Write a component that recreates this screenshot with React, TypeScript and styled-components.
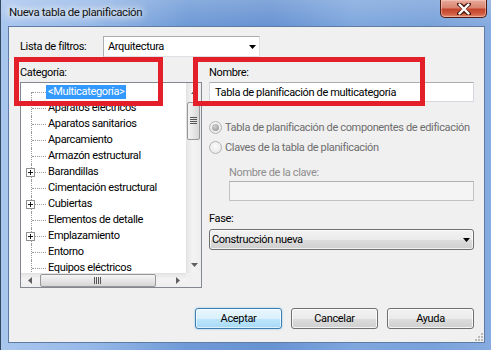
import React from 'react';
import styled, { createGlobalStyle, css } from 'styled-components';

const GlobalStyle = createGlobalStyle`
  html, body { margin: 0; padding: 0; }
  body {
    font-family: Roboto, "Noto Sans", sans-serif;
    font-size: 11px;
    letter-spacing: -0.35px;
    color: #000;
    background: #6f9bd7;
  }
  * { box-sizing: border-box; }
`;

const Frame = styled.div`
  width: 491px;
  height: 350px;
  display: flex;
  flex-direction: column;
  padding: 0 6px 7px 7px;
  border-left: 1px solid #33475f;
  background:
    linear-gradient(180deg, rgba(255, 255, 255, 0.18) 0%, rgba(255, 255, 255, 0) 26px),
    linear-gradient(90deg, #a9c6ee 0%, #97b9e8 18%, #6f9ad6 38%, #6893d2 55%, #7fa7de 72%, #7aa2da 88%, #86abe0 100%);
`;

const TitleBar = styled.div`
  height: 26px;
  display: flex;
  align-items: flex-start;
`;

const Title = styled.div`
  padding: 5px 0 0 1px;
  font-size: 11.5px;
  letter-spacing: -0.4px;
  line-height: 15px;
  color: #111;
  text-shadow: 0 0 6px #fff, 0 0 10px rgba(255, 255, 255, 0.9), 0 0 14px rgba(255, 255, 255, 0.7);
`;

const CloseButton = styled.div`
  margin-left: auto;
  margin-right: -2px;
  width: 47px;
  height: 18px;
  display: flex;
  align-items: center;
  justify-content: center;
  border: 1px solid #4d1c14;
  border-top: none;
  border-radius: 0 0 5px 5px;
  background: linear-gradient(180deg, #e9a99a 0%, #d98470 45%, #c4442c 55%, #cf5a40 80%, #e48a6c 100%);
  box-shadow: inset 0 0 0 1px rgba(255, 220, 210, 0.45);
`;

const Client = styled.div`
  flex: 1;
  position: relative;
  display: flex;
  flex-direction: column;
  padding: 9px 10px 0 11px;
  background: #f0f0f0;
  border: 1px solid #5d7ba3;
`;

const FilterRow = styled.div`
  display: flex;
  align-items: center;
  height: 21px;
`;

const FilterLabel = styled.span`
  width: 83px;
`;

const ListSelect = styled.div`
  width: 157px;
  height: 21px;
  display: flex;
  align-items: center;
  padding-left: 4px;
  background: #fff;
  border: 1px solid #abadb3;
  border-bottom-color: #dcdfe4;
  border-right-color: #dcdfe4;
`;

const SelectText = styled.span`
  flex: 1;
`;

const ArrowSlot = styled.span`
  width: 14px;
  display: flex;
  justify-content: center;
`;

const Main = styled.div`
  display: flex;
  gap: 7px;
  margin-top: 8px;
`;

const LeftColumn = styled.div`
  width: 182px;
  display: flex;
  flex-direction: column;
`;

const RightColumn = styled.div`
  width: 265px;
  display: flex;
  flex-direction: column;
`;

const FieldLabel = styled.div<{ $disabled?: boolean; $indent?: number; $top?: number }>`
  line-height: 15px;
  height: 15px;
  margin-top: ${(p) => p.$top ?? 0}px;
  padding-left: ${(p) => p.$indent ?? 0}px;
  color: ${(p) => (p.$disabled ? '#8d8d8d' : '#000')};
`;

const Tree = styled.div`
  margin-top: 2px;
  height: 206px;
  border: 1px solid #828790;
  background: #fff;
  display: grid;
  grid-template-columns: 165px 15px;
  grid-template-rows: 190px 14px;
`;

const TreeList = styled.div`
  overflow: hidden;
  padding-top: 1px;
`;

const TreeRow = styled.div`
  height: 16px;
  display: flex;
  align-items: center;
  white-space: nowrap;
`;

const Connector = styled.span<{ $first?: boolean }>`
  position: relative;
  width: 25px;
  height: 16px;
  flex: none;
  &::before {
    content: '';
    position: absolute;
    left: 10px;
    top: ${(p) => (p.$first ? '8px' : '0')};
    bottom: 0;
    border-left: 1px dotted #9a9a9a;
  }
  &::after {
    content: '';
    position: absolute;
    left: 11px;
    top: 8px;
    width: 14px;
    border-top: 1px dotted #9a9a9a;
  }
`;

const Expander = styled.svg`
  position: absolute;
  left: 5px;
  top: 4px;
  z-index: 1;
`;

const ItemText = styled.span<{ $selected?: boolean }>`
  padding: 0 2px;
  line-height: 14px;
  ${(p) =>
    p.$selected &&
    css`
      background: #3399ff;
      color: #fff;
    `}
`;

const VScroll = styled.div`
  display: flex;
  flex-direction: column;
  background: linear-gradient(90deg, #e6e6e6, #f3f3f3 40%, #eeeeee);
  border-left: 1px solid #e2e2e2;
`;

const HScroll = styled.div`
  display: flex;
  align-items: center;
  background: linear-gradient(180deg, #e6e6e6, #f3f3f3 40%, #eeeeee);
  border-top: 1px solid #e2e2e2;
`;

const Corner = styled.div`
  background: #f0f0f0;
`;

const ArrowCell = styled.div<{ $vertical?: boolean }>`
  flex: none;
  display: flex;
  align-items: center;
  justify-content: center;
  ${(p) => (p.$vertical ? 'height: 17px;' : 'width: 17px; height: 100%;')}
`;

const Spacer = styled.div`
  flex: 1;
`;

const VThumb = styled.div`
  margin: 2px 0 0 0;
  width: 13px;
  height: 38px;
  border: 1px solid #979797;
  border-radius: 2px;
  background: linear-gradient(90deg, #f4f4f4, #e6e6e6 50%, #d6d6d6);
  display: flex;
  align-items: center;
  justify-content: center;
`;

const HThumb = styled.div`
  margin-left: 2px;
  width: 116px;
  height: 13px;
  border: 1px solid #979797;
  border-radius: 2px;
  background: linear-gradient(180deg, #f4f4f4, #e6e6e6 50%, #d6d6d6);
  display: flex;
  align-items: center;
  justify-content: center;
`;

const TextBox = styled.div<{ $disabled?: boolean }>`
  height: 20px;
  margin-top: ${(p) => (p.$disabled ? 1 : 2)}px;
  margin-left: ${(p) => (p.$disabled ? 20 : 0)}px;
  display: flex;
  align-items: center;
  padding-left: 5px;
  background: ${(p) => (p.$disabled ? '#f4f4f4' : '#fff')};
  border: 1px solid ${(p) => (p.$disabled ? '#c2c2c2' : '#d5d9df')};
  border-top-color: ${(p) => (p.$disabled ? '#adb2b5' : '#abadb3')};
  white-space: nowrap;
`;

const RadioRow = styled.div<{ $top: number }>`
  display: flex;
  align-items: center;
  gap: 3px;
  height: 16px;
  margin-top: ${(p) => p.$top}px;
  color: #6d6d6d;
  white-space: nowrap;
`;

const Radio = styled.span<{ $checked?: boolean }>`
  position: relative;
  width: 13px;
  height: 13px;
  flex: none;
  border-radius: 50%;
  border: 1px solid #b3b3b3;
  background: radial-gradient(circle at 50% 40%, #fbfbfb, #e4e4e4);
  ${(p) =>
    p.$checked &&
    css`
      &::after {
        content: '';
        position: absolute;
        left: 2px;
        top: 2px;
        width: 7px;
        height: 7px;
        border-radius: 50%;
        background: radial-gradient(circle at 40% 35%, #d0d0d0, #8f8f8f);
      }
    `}
`;

const Combo = styled.div`
  margin-top: 3px;
  height: 21px;
  display: flex;
  align-items: center;
  padding-left: 2px;
  border: 1px solid #707070;
  border-radius: 3px;
  background: linear-gradient(180deg, #f2f2f2 0%, #ebebeb 50%, #dddddd 50%, #cfcfcf 100%);
  box-shadow: inset 0 0 0 1px rgba(255, 255, 255, 0.7);
`;

const Footer = styled.div`
  margin-top: 20px;
  display: flex;
  justify-content: flex-end;
  gap: 9px;
`;

const Button = styled.div<{ $primary?: boolean }>`
  width: 87px;
  height: 21px;
  display: flex;
  align-items: center;
  justify-content: center;
  border-radius: 3px;
  border: 1px solid #707070;
  background: linear-gradient(180deg, #f2f2f2 0%, #ebebeb 50%, #dddddd 50%, #cfcfcf 100%);
  box-shadow: inset 0 0 0 1px rgba(255, 255, 255, 0.75);
  ${(p) =>
    p.$primary &&
    css`
      border-color: #3c7fb1;
      background: linear-gradient(180deg, #eaf6fd 0%, #d9f0fc 50%, #bee6fd 50%, #a7d9f5 100%);
      box-shadow: inset 0 0 0 1px rgba(255, 255, 255, 0.6), 0 0 2px rgba(60, 160, 230, 0.6);
    `}
`;

const Highlight = styled.div<{ $left: number; $width: number }>`
  position: absolute;
  top: 30px;
  left: ${(p) => p.$left}px;
  width: ${(p) => p.$width}px;
  height: 49px;
  border: 5px solid #e3202a;
  pointer-events: none;
`;

const Grip = styled.svg`
  position: absolute;
  right: 1px;
  bottom: 1px;
`;

const categories = [
  { name: '<Multicategoría>', selected: true },
  { name: 'Aparatos eléctricos' },
  { name: 'Aparatos sanitarios' },
  { name: 'Aparcamiento' },
  { name: 'Armazón estructural' },
  { name: 'Barandillas', expandable: true },
  { name: 'Cimentación estructural' },
  { name: 'Cubiertas', expandable: true },
  { name: 'Elementos de detalle' },
  { name: 'Emplazamiento', expandable: true },
  { name: 'Entorno' },
  { name: 'Equipos eléctricos' },
];

const DownArrow = ({ color = '#000' }: { color?: string }) => (
  <svg width="7" height="4" viewBox="0 0 7 4">
    <polygon points="0,0 7,0 3.5,4" fill={color} />
  </svg>
);

const Arrow = ({ dir }: { dir: 'up' | 'down' | 'left' | 'right' }) => {
  const pts = {
    up: '0,4 7,4 3.5,0',
    down: '0,0 7,0 3.5,4',
    left: '4,0 4,7 0,3.5',
    right: '0,0 0,7 4,3.5',
  }[dir];
  const vertical = dir === 'up' || dir === 'down';
  return (
    <svg width={vertical ? 7 : 4} height={vertical ? 4 : 7} viewBox={vertical ? '0 0 7 4' : '0 0 4 7'}>
      <polygon points={pts} fill="#606060" />
    </svg>
  );
};

const GripLines = ({ vertical }: { vertical?: boolean }) =>
  vertical ? (
    <svg width="8" height="7" viewBox="0 0 8 7">
      {[0, 2, 4, 6].map((x) => (
        <rect key={x} x={x} y="0" width="1" height="7" fill="#555" />
      ))}
    </svg>
  ) : (
    <svg width="7" height="8" viewBox="0 0 7 8">
      {[0, 2, 4, 6].map((y) => (
        <rect key={y} x="0" y={y} width="7" height="1" fill="#555" />
      ))}
    </svg>
  );

export default function App() {
  return (
    <>
      <GlobalStyle />
      <Frame>
        <TitleBar>
          <Title>Nueva tabla de planificación</Title>
          <CloseButton>
            <svg width="14" height="12" viewBox="0 0 14 12">
              <path
                d="M2 1 L7 5 L12 1 M2 11 L7 7 L12 11"
                fill="none"
                stroke="#4a1a12"
                strokeWidth="4.2"
                strokeLinecap="round"
              />
              <path d="M2.5 1.5 L11.5 10.5 M11.5 1.5 L2.5 10.5" fill="none" stroke="#fff" strokeWidth="2.4" strokeLinecap="round" />
            </svg>
          </CloseButton>
        </TitleBar>
        <Client>
          <FilterRow>
            <FilterLabel>Lista de filtros:</FilterLabel>
            <ListSelect>
              <SelectText>Arquitectura</SelectText>
              <ArrowSlot>
                <DownArrow />
              </ArrowSlot>
            </ListSelect>
          </FilterRow>

          <Main>
            <LeftColumn>
              <FieldLabel>Categoría:</FieldLabel>
              <Tree>
                <TreeList>
                  {categories.map((c, i) => (
                    <TreeRow key={c.name}>
                      <Connector $first={i === 0}>
                        {c.expandable && (
                          <Expander width="9" height="9" viewBox="0 0 9 9">
                            <rect x="0.5" y="0.5" width="8" height="8" fill="#fff" stroke="#8e8f8f" />
                            <path d="M2 4.5 H7 M4.5 2 V7" stroke="#1a1a1a" strokeWidth="1" />
                          </Expander>
                        )}
                      </Connector>
                      <ItemText $selected={c.selected}>{c.name}</ItemText>
                    </TreeRow>
                  ))}
                </TreeList>
                <VScroll>
                  <ArrowCell $vertical>
                    <Arrow dir="up" />
                  </ArrowCell>
                  <VThumb>
                    <GripLines />
                  </VThumb>
                  <Spacer />
                  <ArrowCell $vertical>
                    <Arrow dir="down" />
                  </ArrowCell>
                </VScroll>
                <HScroll>
                  <ArrowCell>
                    <Arrow dir="left" />
                  </ArrowCell>
                  <HThumb>
                    <GripLines vertical />
                  </HThumb>
                  <Spacer />
                  <ArrowCell>
                    <Arrow dir="right" />
                  </ArrowCell>
                </HScroll>
                <Corner />
              </Tree>
            </LeftColumn>

            <RightColumn>
              <FieldLabel>Nombre:</FieldLabel>
              <TextBox>Tabla de planificación de multicategoría</TextBox>
              <RadioRow $top={17}>
                <Radio $checked />
                Tabla de planificación de componentes de edificación
              </RadioRow>
              <RadioRow $top={4}>
                <Radio />
                Claves de la tabla de planificación
              </RadioRow>
              <FieldLabel $disabled $indent={20} $top={10}>
                Nombre de la clave:
              </FieldLabel>
              <TextBox $disabled />
              <FieldLabel $top={10}>Fase:</FieldLabel>
              <Combo>
                <SelectText>Construcción nueva</SelectText>
                <ArrowSlot>
                  <DownArrow />
                </ArrowSlot>
              </Combo>
            </RightColumn>
          </Main>

          <Footer>
            <Button $primary>Aceptar</Button>
            <Button>Cancelar</Button>
            <Button>Ayuda</Button>
          </Footer>

          <Highlight $left={5} $width={149} />
          <Highlight $left={184} $width={232} />
          <Grip width="8" height="8" viewBox="0 0 8 8">
            {[
              [6, 0],
              [6, 3],
              [3, 3],
              [6, 6],
              [3, 6],
              [0, 6],
            ].map(([x, y]) => (
              <rect key={`${x}-${y}`} x={x} y={y} width="2" height="2" fill="#b9b9b9" />
            ))}
          </Grip>
        </Client>
      </Frame>
    </>
  );
}
